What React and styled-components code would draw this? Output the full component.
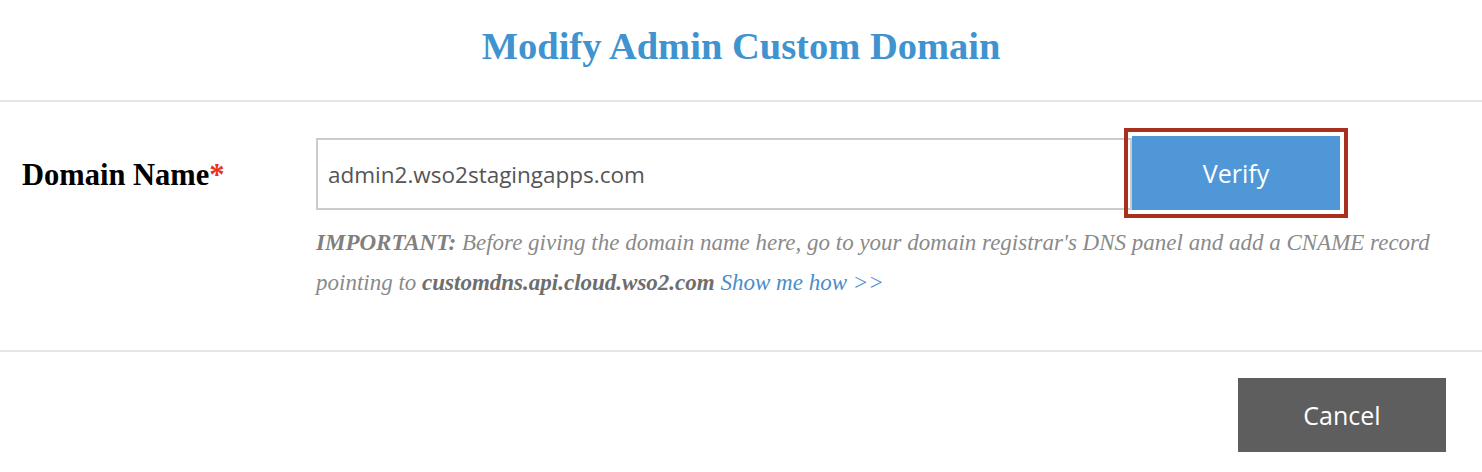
import React from "react";
import styled, { createGlobalStyle } from "styled-components";

const GlobalStyle = createGlobalStyle`
  html, body {
    margin: 0;
    padding: 0;
    background: #fff;
  }
`;

function App() {
  return (
    <Root>
      <GlobalStyle />
      <Header>
        <Title>Modify Admin Custom Domain</Title>
      </Header>
      <Body>
        <Label>
          Domain Name<Required>*</Required>
        </Label>
        <Field>
          <InputRow>
            <DomainInput defaultValue="admin2.wso2stagingapps.com" />
            <VerifyButton>Verify</VerifyButton>
          </InputRow>
          <Help>
            <Strong>IMPORTANT:</Strong> Before giving the domain name here, go to
            your domain registrar's DNS panel and add a CNAME record pointing to{" "}
            <Host>customdns.api.cloud.wso2.com</Host> <Link>Show me how &gt;&gt;</Link>
          </Help>
        </Field>
      </Body>
      <Footer>
        <CancelButton>Cancel</CancelButton>
      </Footer>
    </Root>
  );
}

const Root = styled.div`
  display: flex;
  flex-direction: column;
  width: 1482px;
  height: 472px;
  background: #fff;
  overflow: hidden;
`;

const Header = styled.div`
  display: flex;
  justify-content: center;
  height: 102px;
  padding-top: 24px;
  box-sizing: border-box;
  border-bottom: 2px solid #e6e6e6;
`;

const Title = styled.h1`
  margin: 0;
  font-family: "Liberation Serif", "Times New Roman", serif;
  font-size: 38.5px;
  line-height: 44px;
  font-weight: bold;
  color: #3f93cf;
`;

const Body = styled.div`
  display: flex;
  padding: 34px 0 47px 22px;
  border-bottom: 2px solid #e6e6e6;
`;

const Label = styled.div`
  width: 294px;
  margin-top: 21px;
  font-family: "Liberation Serif", "Times New Roman", serif;
  font-size: 30.5px;
  line-height: 36px;
  font-weight: bold;
  color: #000;
`;

const Required = styled.span`
  color: #e8331f;
`;

const Field = styled.div`
  display: flex;
  flex-direction: column;
  width: 1132px;
`;

const InputRow = styled.div`
  display: flex;
  align-items: flex-end;
  width: 1024px;
`;

const DomainInput = styled.input`
  flex: 1;
  height: 72px;
  box-sizing: border-box;
  padding: 0 10px;
  border: 2px solid #cccccc;
  outline: none;
  font-family: "Open Sans", sans-serif;
  font-size: 22.5px;
  color: #555;
`;

const VerifyButton = styled.button`
  width: 208px;
  height: 74px;
  border: none;
  background: #4f97d6;
  color: #fff;
  font-family: "Open Sans", sans-serif;
  font-size: 25px;
  outline: 4px solid #a8301f;
  outline-offset: 4px;
`;

const Help = styled.p`
  margin: 13px 0 0;
  font-family: "Liberation Serif", "Times New Roman", serif;
  font-style: italic;
  font-size: 23px;
  line-height: 40px;
  color: #8a8a8a;
`;

const Strong = styled.b`
  color: #808080;
`;

const Host = styled.b`
  color: #6e6e6e;
`;

const Link = styled.a`
  color: #4a8dcc;
  cursor: pointer;
`;

const Footer = styled.div`
  display: flex;
  justify-content: flex-end;
  padding: 26px 36px 0 0;
`;

const CancelButton = styled.button`
  width: 208px;
  height: 74px;
  border: none;
  background: #5e5e5e;
  color: #fff;
  font-family: "Open Sans", sans-serif;
  font-size: 25px;
`;

export default App;
